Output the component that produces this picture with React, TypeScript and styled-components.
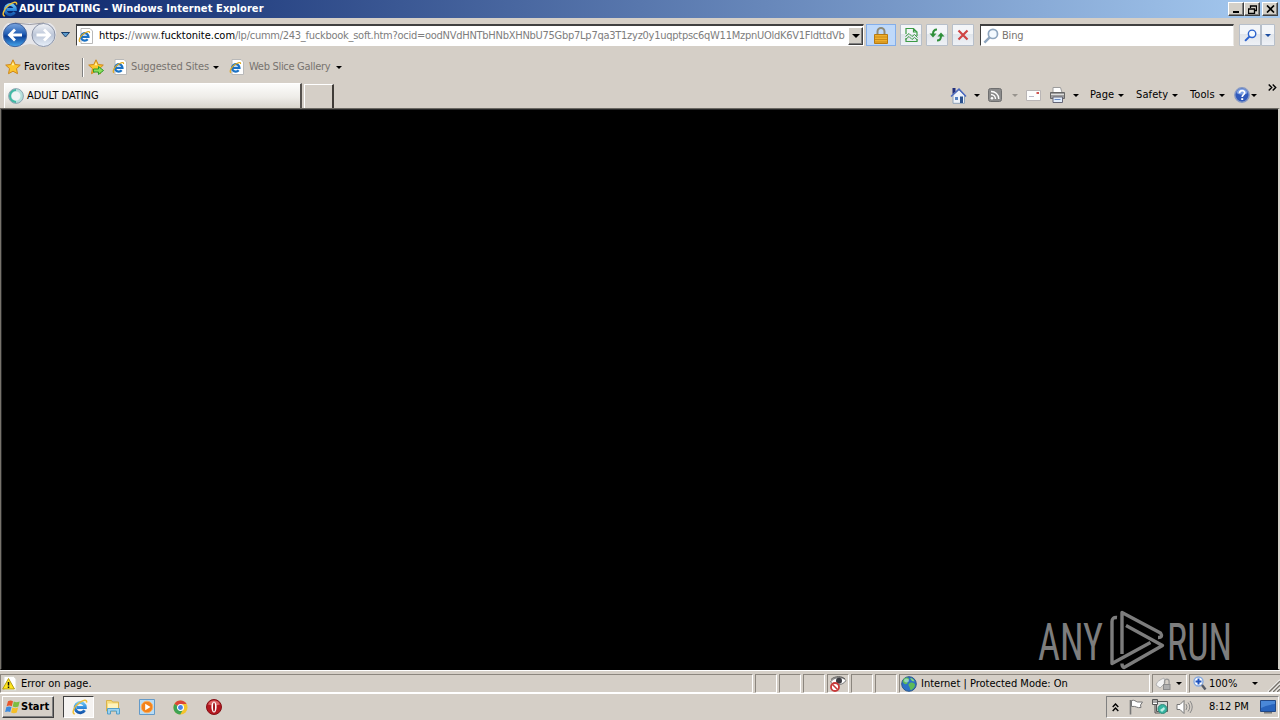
import React from 'react';
import styled, { createGlobalStyle, css } from 'styled-components';

const GlobalStyle = createGlobalStyle`
  * {
    box-sizing: border-box;
  }
  body {
    margin: 0;
    overflow: hidden;
    background: #d4d0c8;
    font-family: 'DejaVu Sans Condensed', 'DejaVu Sans', sans-serif;
    font-stretch: condensed;
    font-size: 11px;
    line-height: 14px;
    color: #000;
  }
  svg {
    display: block;
    flex: none;
  }
`;

type SpaceProps = { $ml?: number; $w?: number };

const URL_TAIL =
  '/lp/cumm/243_fuckbook_soft.htm?ocid=oodNVdHNTbHNbXHNbU75Gbp7Lp7qa3T1zyz0y1uqptpsc6qW11MzpnUOldK6V1FldttdVb';

const IeIcon = ({ size = 16 }: { size?: number }) => (
  <svg width={size} height={size} viewBox="0 0 16 16">
    <defs>
      <linearGradient id="ie" x1="0" y1="0" x2="0" y2="1">
        <stop offset="0" stopColor="#6cc4f3" />
        <stop offset=".5" stopColor="#2f8bdc" />
        <stop offset="1" stopColor="#1657ac" />
      </linearGradient>
    </defs>
    <path
      d="M12.600 11.200A5.100 5.100 0 1 1 13.300 8.600H5"
      fill="none"
      stroke="url(#ie)"
      strokeWidth="3"
    />
    <path
      d="M2.800 15C-.600 14.800 1.500 8 7 4 11 1 15.500-.200 14.500 3.600"
      fill="none"
      stroke="#efbe35"
      strokeWidth="1.500"
    />
  </svg>
);

const PageIeIcon = () => (
  <svg width="16" height="16" viewBox="0 0 16 16">
    <path d="M3 .5h9l2.500 2.500v12.500H3z" fill="#fff" stroke="#b9b9b9" />
    <path d="M9.700 11.200A3.700 3.700 0 1 1 10.500 8.800H4" fill="none" stroke="#1b72c4" strokeWidth="2.200" />
    <path d="M2 13.800C-.4 12.500 3 7.500 6 5.500s6-3 5.500-.5" fill="none" stroke="#dfa91f" strokeWidth="1.200" />
  </svg>
);

const NavIcons = () => (
  <svg width="58" height="28" viewBox="0 0 58 28">
    <defs>
      <linearGradient id="back" x1="0" y1="0" x2="0" y2="1">
        <stop offset="0" stopColor="#7ba6df" />
        <stop offset=".45" stopColor="#235fb5" />
        <stop offset=".55" stopColor="#0a3f98" />
        <stop offset="1" stopColor="#48a9ee" />
      </linearGradient>
      <linearGradient id="fwd" x1="0" y1="0" x2="0" y2="1">
        <stop offset="0" stopColor="#f2f4f8" />
        <stop offset=".5" stopColor="#bcc6d8" />
        <stop offset="1" stopColor="#e8f0fa" />
      </linearGradient>
    </defs>
    <path d="M8 2h42c5 3 7 8 6 13s-4 10-12 11c-6 0-9-3-14-3S20 27 13 26C4 25 1 18 2 12S5 4 8 2" fill="#e6e6ea" />
    <path d="M15 2q15 3 29 0" fill="none" stroke="#9a9aa2" />
    <circle cx="15" cy="14" r="11.700" fill="url(#back)" stroke="#43629a" />
    <path d="M22 14H10M15 8.500L9.500 14l5.500 5.500" fill="none" stroke="#fff" strokeWidth="2.800" />
    <circle cx="43.500" cy="14" r="11.500" fill="url(#fwd)" stroke="#8b93a6" />
    <path d="M36.500 14H49M44 8.500l5.500 5.500-5.500 5.500" fill="none" stroke="#fff" strokeWidth="2.800" />
  </svg>
);

const StarIcon = ({ add }: { add?: boolean }) => (
  <svg width="16" height="16" viewBox="0 0 16 16">
    <path
      d="M8 .8l2.200 4.700 5.100.6-3.800 3.500 1 5.100L8 12.200l-4.500 2.500 1-5.100L.7 6.100l5.100-.6z"
      fill="#fcc62d"
      stroke="#cf871a"
    />
    <path d="M8 3l1.300 3.300H6.500z" fill="#fff1a8" />
    {add && <path d="M5.500 10h5V7.500L15.500 11.500l-5 4V13h-5z" fill="#8be05c" stroke="#2f9a2c" />}
  </svg>
);

const LoadingIcon = () => (
  <svg width="16" height="16" viewBox="0 0 16 16">
    <circle cx="8" cy="8" r="6" fill="#eef4f4" stroke="#b5dfdc" strokeWidth="3" />
    <path d="M8 2a6 6 0 0 0-6 6 6 6 0 0 0 6 6" fill="none" stroke="#3fb9a4" strokeWidth="2" />
    <circle cx="8" cy="8" r="7.400" fill="none" stroke="#7d94a6" strokeWidth=".8" />
  </svg>
);

const LockIcon = () => (
  <svg width="14" height="17" viewBox="0 0 14 17">
    <path d="M3.500 8V4.500a3.500 3.500 0 0 1 7 0V8" fill="none" stroke="#8e8a78" strokeWidth="2" />
    <path d="M.5 7.500h13v9H.5z" fill="#efb02e" stroke="#b87a12" />
    <path d="M1 10h12M1 12.500h12M1 15h12" stroke="#c98a18" />
  </svg>
);

const CompatIcon = () => (
  <svg width="13" height="16" viewBox="0 0 13 16">
    <path d="M1 7V1.500h7.500L12 5v4M1 11v3.500h11V12M8.500 1.500V5H12" fill="none" stroke="#3c9a45" strokeWidth="1.200" />
    <path d="M.5 9.500L4 6.500l3 3 2.500-2 3 3M.5 12.500l3.500-3 3 3 2.500-2 3 2.500" fill="none" stroke="#3c9a45" />
  </svg>
);

const RefreshIcon = () => (
  <svg width="16" height="14" viewBox="0 0 16 14">
    <path d="M8 1.500C5 1.500 4 3 4 6" fill="none" stroke="#2f8f3a" strokeWidth="2" />
    <path d="M.5 5.500h7L4 9.500z" fill="#2f8f3a" />
    <path d="M8 12.500c3 0 4-1.500 4-4.500" fill="none" stroke="#2f8f3a" strokeWidth="2" />
    <path d="M8.500 8.500h7L12 4.500z" fill="#2f8f3a" />
  </svg>
);

const StopIcon = () => (
  <svg width="12" height="12" viewBox="0 0 12 12">
    <path d="M1.500 1.500l9 9M10.500 1.500l-9 9" stroke="#cf4444" strokeWidth="2.200" />
  </svg>
);

const MagnifierIcon = ({ color, size = 14 }: { color: string; size?: number }) => (
  <svg width={size} height={size} viewBox="0 0 14 14">
    <circle cx="8.700" cy="5.200" r="4" fill="#f4faff" stroke={color} strokeWidth="1.500" />
    <path d="M5.800 8.200L1.200 12.800" stroke={color} strokeWidth="2.200" />
  </svg>
);

const HomeIcon = () => (
  <svg width="17" height="17" viewBox="0 0 17 17">
    <path d="M3 8v8.300h11.500V8L9 3z" fill="#eef3fa" stroke="#8fa3b8" />
    <path d="M1 9.500L9 2l7 7.500" fill="none" stroke="#4a68c0" strokeWidth="1.500" />
    <path d="M2.500 1h3v3.500l-3 2.500z" fill="#22307c" />
    <path d="M5 10h3v3H5z" fill="#5482c4" />
    <path d="M10 9.500h3V16h-3z" fill="#2b518f" />
  </svg>
);

const FeedIcon = () => (
  <svg width="14" height="14" viewBox="0 0 14 14">
    <rect x=".5" y=".5" width="13" height="13" rx="2" fill="#8c8c8c" stroke="#6f6f6f" />
    <circle cx="4" cy="10.300" r="1.300" fill="#fff" />
    <path d="M3 6.500A4.500 4.500 0 0 1 7.500 11M3 3.500A7.500 7.500 0 0 1 10.800 11" fill="none" stroke="#fff" strokeWidth="1.400" />
  </svg>
);

const MailIcon = () => (
  <svg width="15" height="11" viewBox="0 0 15 11">
    <path d="M.5.5h14v10H.5z" fill="#fdfdfd" stroke="#b9b5b5" />
    <path d="M10.500 2h2.500v2h-2.500z" fill="#cf5350" />
    <path d="M3 6.500h5" stroke="#b8b8c8" />
  </svg>
);

const PrinterIcon = () => (
  <svg width="17" height="16" viewBox="0 0 17 16">
    <path d="M4 .5h7.500l1.500 5H4z" fill="#fff" stroke="#9c9c9c" />
    <path d="M1.500 5.500h14v6h-14z" fill="#9b9b9b" stroke="#666" />
    <path d="M2 7.500h13" stroke="#ddd" />
    <path d="M4 10h9.500v5.500H4z" fill="#e2edfa" stroke="#667" />
    <path d="M5.500 12.500h6" stroke="#6388c5" />
  </svg>
);

const HelpIcon = () => (
  <svg width="16" height="16" viewBox="0 0 16 16">
    <circle cx="8" cy="8" r="7.200" fill="#3059bb" stroke="#8699c4" strokeWidth="1.400" />
    <path d="M2.500 6a5.700 5.700 0 0 1 11 0c-3 2-8 2-11 0" fill="#7da0e4" />
    <path d="M5.500 6.200c0-3.600 5.200-3.300 5.200-.4C10.700 7.600 8.200 7.800 8.200 10" fill="none" stroke="#fff" strokeWidth="1.700" />
    <path d="M7.200 11.200h2v1.800h-2z" fill="#fff" />
  </svg>
);

const WarningIcon = () => (
  <svg width="15" height="15" viewBox="0 0 15 15">
    <path d="M2 .5h9.500l2.500 2.500v11.500H2z" fill="#fff" stroke="#d8d8d0" />
    <path d="M6.500 2.500L12.500 13H.7z" fill="#ffe51c" stroke="#b39c12" />
    <path d="M6.500 6v3.500M6.500 10.500V12" stroke="#111" strokeWidth="1.500" />
  </svg>
);

const PrivacyIcon = () => (
  <svg width="18" height="16" viewBox="0 0 18 16">
    <path d="M1.500 6c3-5 12-6 15.500-1.500-3 5-11.500 6-15.500 1.500" fill="#fff" stroke="#777" />
    <path d="M2 3.500C6-.3 13 0 16 3" fill="none" stroke="#555" />
    <circle cx="10" cy="4.700" r="3" fill="#3a3a40" />
    <circle cx="6" cy="11" r="4" fill="#fff" stroke="#c73a3a" strokeWidth="1.800" />
    <path d="M3.500 8.500l5 5" stroke="#c73a3a" strokeWidth="1.600" />
  </svg>
);

const GlobeIcon = () => (
  <svg width="16" height="16" viewBox="0 0 16 16">
    <circle cx="8" cy="8" r="7.300" fill="#2c72c6" stroke="#2a568c" />
    <path d="M3 2.500c3-2 5-1 5 .5S6 5 6.500 6.500 4 9 3 7.500 1 6 3 2.500M9 7c2-1 5 0 5 2s-2 4-3.500 5S9 11 8 10s-.5-2.300 1-3" fill="#5ebb57" />
    <path d="M9 2c2 0 4 1.500 4.500 3.500L11 5z" fill="#86d778" />
    <ellipse cx="5.500" cy="4.500" rx="2.500" ry="2" fill="#bde8f5" opacity=".6" />
  </svg>
);

const ShieldLockIcon = () => (
  <svg width="17" height="15" viewBox="0 0 17 15">
    <path d="M1 9c1-4 4-5 8-7l1 5-5 5z" fill="#f4f4f4" stroke="#b0b0b0" />
    <path d="M9.500 8V5.500a2.300 2.300 0 0 1 4.600 0V8" fill="none" stroke="#989898" strokeWidth="1.300" />
    <path d="M8 8h7.500v6H8z" fill="#8c8c8c" />
    <path d="M9 10h5.500M9 12h5.500" stroke="#d0d0d0" />
  </svg>
);

const ZoomIcon = () => (
  <svg width="14" height="15" viewBox="0 0 14 15">
    <circle cx="5.500" cy="5.500" r="4.500" fill="#fff" stroke="#86a9df" strokeWidth="1.400" />
    <path d="M5.500 2.500v6M2.500 5.500h6" stroke="#1d51bd" strokeWidth="2" />
    <path d="M9 9l3.500 4.500" stroke="#555a66" strokeWidth="2.400" />
  </svg>
);

const WindowsFlag = () => (
  <svg width="17" height="16" viewBox="0 0 16 16">
    <path d="M3.500 2.200c2-1 3.500-.8 5 0L7.300 7.200c-1.600-.9-3.200-.9-5.200 0z" fill="#e8562b" />
    <path d="M9.300 2.600c2 .9 3.600.8 5.900-.1l-1.300 5c-2 .9-3.800.9-5.700 0z" fill="#7cbd42" />
    <path d="M1.900 8.100c2-.9 3.600-.8 5.100 0l-1.300 5c-1.500-.9-3-.9-5.100 0z" fill="#3c8ade" />
    <path d="M7.900 8.500c2 .9 3.800.8 5.700 0l-1.300 5c-2 .9-3.700.9-5.700 0z" fill="#f5bf27" />
  </svg>
);

const ExplorerIcon = () => (
  <svg width="16" height="16" viewBox="0 0 16 16">
    <path d="M1.500 1.500h5l1 1.500h6v9h-12z" fill="#f6dc7d" stroke="#d9b24b" />
    <path d="M3 4.500h10V9H3z" fill="#fff3bd" />
    <path d="M2.500 15V9.500h12V15h-3v-3h-6v3z" fill="#9bd3f1" stroke="#549fc9" />
  </svg>
);

const MediaIcon = () => (
  <svg width="17" height="16" viewBox="0 0 17 16">
    <path d="M.5.5h15v15H.5z" fill="#b8dcf5" stroke="#649ac8" />
    <circle cx="8" cy="8" r="5.800" fill="#f3831b" stroke="#f9b064" />
    <path d="M6.200 4.700L11.500 8l-5.300 3.300z" fill="#fff" />
  </svg>
);

const ChromeIcon = () => (
  <svg width="15" height="15" viewBox="0 0 16 16">
    <circle cx="8" cy="8" r="7.500" fill="#f4c42c" />
    <path d="M8 8L1.500 4.200A7.500 7.500 0 0 1 14.500 4.300H8z" fill="#dc4538" />
    <path d="M8 8L1.500 4.200A7.500 7.500 0 0 0 7.700 15.500L11 9.700z" fill="#3ea353" />
    <circle cx="8" cy="8" r="3.200" fill="#4684e8" stroke="#fff" strokeWidth="1.200" />
  </svg>
);

const OperaIcon = () => (
  <svg width="16" height="16" viewBox="0 0 16 16">
    <circle cx="8" cy="8" r="7.500" fill="#b41820" stroke="#841015" />
    <path d="M2 5.500a6.500 6.500 0 0 1 12 0c-4 1.500-8 1.500-12 0" fill="#dd6566" />
    <ellipse cx="8" cy="8" rx="2.600" ry="5.500" fill="#fff" />
    <ellipse cx="8" cy="8" rx="1" ry="4.500" fill="#a3161c" />
  </svg>
);

const FlagIcon = () => (
  <svg width="16" height="16" viewBox="0 0 16 16">
    <path d="M2.500 1v14.500" stroke="#777" strokeWidth="1.600" />
    <path d="M3.500 1.500c3-1 4 1 6 1.500h5l-2 3 .5 2.500c-4 1-5-2-9.500-1z" fill="#fff" stroke="#777" />
  </svg>
);

const NetworkIcon = () => (
  <svg width="16" height="16" viewBox="0 0 16 16">
    <path d="M4.500 2.500h11v10h-11z" fill="#d4d9d8" stroke="#555" />
    <path d="M.5.500h5v5h-5z" fill="#fff" stroke="#555" />
    <path d="M2 1v3M4 1v3M3 6v8h5" fill="none" stroke="#555" />
    <circle cx="10.500" cy="10" r="4.500" fill="#36b5a2" stroke="#338878" />
    <path d="M8 11l4-3 1 2-3 3z" fill="#b9efe4" />
  </svg>
);

const SpeakerIcon = () => (
  <svg width="17" height="16" viewBox="0 0 17 16">
    <path d="M1 5.500h3l4-4v13l-4-4H1z" fill="#fff" stroke="#777" />
    <path d="M10 5q2 3 0 6M12 3.500q3.500 4.500 0 9M14 2q4.500 6 0 12" fill="none" stroke="#888" />
  </svg>
);

const DesktopIcon = () => (
  <svg width="16" height="14" viewBox="0 0 16 14">
    <path d="M.5.500h15v11H.5z" fill="#2864bd" stroke="#234986" />
    <path d="M1 1h14v3Q6 5 1 8z" fill="#4a88d8" />
    <path d="M4 12.800h8" stroke="#777" strokeWidth="1.400" />
  </svg>
);

const SizeGrip = () => (
  <svg width="13" height="13" viewBox="0 0 13 13">
    <path d="M1 13L13 1M5 13l8-8M9 13l4-4" stroke="#fff" strokeWidth="1.500" />
    <path d="M2 13L13 2M6 13l7-7M10 13l3-3" stroke="#77736c" strokeWidth="1.300" />
  </svg>
);

const Watermark = () => (
  <svg width="200" height="66" viewBox="0 0 200 66" overflow="visible">
    <g fill="#7d7d7d" fontFamily="Roboto, sans-serif" fontSize="52" fontWeight="400">
      <text x="2" y="57" textLength="65" lengthAdjust="spacingAndGlyphs">ANY</text>
      <text x="131" y="57" textLength="65" lengthAdjust="spacingAndGlyphs">RUN</text>
    </g>
    <g fill="none" stroke="#7d7d7d" strokeWidth="3.400" strokeLinejoin="round">
      <path d="M81 14.500q-5-.5-5 4V60.500L114.500 39.500" />
      <path d="M86 51V9.500L124.500 30q3 4.500-2.500 4.500" />
      <path d="M90 22.500L126.500 42.500L88 64.500q-2-.5-2-4" />
    </g>
  </svg>
);

const App = () => (
  <Window>
    <GlobalStyle />
    <TitleBar>
      <IeIcon />
      <TitleText>ADULT DATING - Windows Internet Explorer</TitleText>
      <CaptionButton>
        <svg width="8" height="8"><path d="M1 6h6v2H1z" /></svg>
      </CaptionButton>
      <CaptionButton>
        <svg width="9" height="9" viewBox="0 0 9 9">
          <path d="M2.500 3V1h6v4.500H6.500M2 1h7M.5 4h6v4.500h-6zM0 4h7" fill="none" stroke="#000" strokeWidth="1.300" />
        </svg>
      </CaptionButton>
      <CaptionButton $ml={2}>
        <svg width="9" height="8" viewBox="0 0 9 8"><path d="M1 .5l7 7M8 .5l-7 7" stroke="#000" strokeWidth="1.700" /></svg>
      </CaptionButton>
    </TitleBar>

    <NavBar>
      <NavIcons />
      <HistoryArrow width="9" height="6" viewBox="0 0 9 6">
        <path d="M.5.5h8L4.500 5z" fill="#5a99cb" stroke="#173c68" />
      </HistoryArrow>
      <AddressBox>
        <PageIeIcon />
        <AddressText>
          <UrlHost>https:</UrlHost>//www.<UrlHost>fucktonite.com</UrlHost>
          <UrlTail>{URL_TAIL}</UrlTail>
        </AddressText>
        <ComboButton><Arrow $size={4} /></ComboButton>
      </AddressBox>
      <LockButton><LockIcon /></LockButton>
      <ToolButton $ml={4}><CompatIcon /></ToolButton>
      <ToolButton $ml={4}><RefreshIcon /></ToolButton>
      <ToolButton $ml={4}><StopIcon /></ToolButton>
      <SearchBox>
        <MagnifierIcon color="#8fa6bf" size={16} />
        <Label $ml={3} $muted $track={-0.2}>Bing</Label>
      </SearchBox>
      <ToolButton $ml={5} $w={22}><MagnifierIcon color="#2b62cd" size={13} /></ToolButton>
      <ToolButton $w={14}><Arrow $color="#1b4da0" /></ToolButton>
    </NavBar>

    <FavoritesBar>
      <StarIcon />
      <Label $ml={3} $w={58} $track={0.12}>Favorites</Label>
      <Divider />
      <StarIcon add />
      <Item $ml={8}><PageIeIcon /></Item>
      <Label $ml={3} $w={82} $muted $track={-0.12}>Suggested Sites</Label>
      <Arrow />
      <Item $ml={10}><PageIeIcon /></Item>
      <Label $ml={4} $w={87} $muted $track={-0.3}>Web Slice Gallery</Label>
      <Arrow />
    </FavoritesBar>

    <TabBar>
      <Tab>
        <LoadingIcon />
        <Label $ml={3} $track={-0.05}>ADULT DATING</Label>
      </Tab>
      <NewTab />
      <CommandBar>
        <Item $w={24}><HomeIcon /></Item>
        <Arrow />
        <Item $ml={8} $w={24}><FeedIcon /></Item>
        <Arrow $color="#98948e" />
        <Item $ml={8} $w={23}><MailIcon /></Item>
        <Item $w={24}><PrinterIcon /></Item>
        <Arrow />
        <Label $ml={11} $w={28} $track={0.1}>Page</Label>
        <Arrow />
        <Label $ml={12} $w={36} $track={0.1}>Safety</Label>
        <Arrow />
        <Label $ml={12} $w={29} $track={0.1}>Tools</Label>
        <Arrow />
        <Item $ml={9} $w={17}><HelpIcon /></Item>
        <Arrow />
        <Chevron width="9" height="7" viewBox="0 0 9 7">
          <path d="M.7.5l3 3-3 3M4.700.5l3 3-3 3" fill="none" stroke="#000" strokeWidth="1.400" />
        </Chevron>
      </CommandBar>
    </TabBar>

    <Content>
      <Watermark />
    </Content>

    <StatusBar>
      <StatusPane $grow>
        <WarningIcon />
        <Label $ml={4}>Error on page.</Label>
      </StatusPane>
      <StatusPane $w={22} />
      <StatusPane $w={22} />
      <StatusPane $w={22} />
      <StatusPane $w={22}><PrivacyIcon /></StatusPane>
      <StatusPane $w={22} />
      <StatusPane $w={22} />
      <StatusPane $w={251}>
        <GlobeIcon />
        <Label $ml={4}>Internet | Protected Mode: On</Label>
      </StatusPane>
      <StatusPane $w={35}>
        <Item $ml={1} $w={21}><ShieldLockIcon /></Item>
        <Arrow />
      </StatusPane>
      <StatusPane $w={91} $open>
        <Item $ml={2} $w={16}><ZoomIcon /></Item>
        <Label $w={43}>100%</Label>
        <Arrow />
        <Grip><SizeGrip /></Grip>
      </StatusPane>
    </StatusBar>

    <Taskbar>
      <StartButton>
        <WindowsFlag />
        <Label $bold>Start</Label>
      </StartButton>
      <ActiveTask><IeIcon /></ActiveTask>
      <Item $ml={11} $w={34}><ExplorerIcon /></Item>
      <Item $w={34}><MediaIcon /></Item>
      <Item $w={33}><ChromeIcon /></Item>
      <Item><OperaIcon /></Item>
      <Tray>
        <Item $ml={5} $w={16}>
          <svg width="7" height="9" viewBox="0 0 7 9">
            <path d="M.7 4l2.800-3 2.800 3M.7 8l2.800-3 2.800 3" fill="none" stroke="#000" strokeWidth="1.400" />
          </svg>
        </Item>
        <Item $w={24}><FlagIcon /></Item>
        <Item $w={24}><NetworkIcon /></Item>
        <Item $w={33}><SpeakerIcon /></Item>
        <Label $w={51}>8:12 PM</Label>
        <DesktopIcon />
      </Tray>
    </Taskbar>
  </Window>
);

export default App;

const space = css<SpaceProps>`
  margin-left: ${({ $ml = 0 }) => $ml}px;
  ${({ $w }) => $w !== undefined && `width: ${$w}px;`}
`;

const Window = styled.div`
  display: flex;
  flex-direction: column;
  width: 1280px;
  height: 720px;
  background: #d5cfc7;
`;

const Item = styled.div<SpaceProps>`
  ${space}
  display: flex;
  align-items: center;
  flex: none;
`;

const Label = styled.span<SpaceProps & { $muted?: boolean; $bold?: boolean; $track?: number }>`
  ${space}
  flex: none;
  white-space: nowrap;
  color: ${({ $muted }) => ($muted ? '#77736f' : '#000')};
  font-weight: ${({ $bold }) => ($bold ? 700 : 400)};
  letter-spacing: ${({ $track = 0 }) => $track}px;
`;

const Arrow = styled.span<{ $size?: number; $color?: string }>`
  flex: none;
  border: ${({ $size = 3 }) => $size}px solid transparent;
  border-top-color: ${({ $color = '#000' }) => $color};
  border-bottom: 0;
`;

const TitleBar = styled.header`
  display: flex;
  align-items: center;
  height: 18px;
  padding: 0 2px;
  background: linear-gradient(90deg, #0a246a, #a6caf0);
`;

const TitleText = styled.h1`
  flex: 1;
  margin: 0 0 0 1px;
  font-size: 11px;
  line-height: 14px;
  letter-spacing: 0.09px;
  color: #fff;
`;

const raised = css`
  border: 1px solid;
  border-color: #fff #404040 #404040 #fff;
  box-shadow: inset -1px -1px #808080;
`;

const CaptionButton = styled.div<SpaceProps>`
  ${space}
  ${raised}
  display: flex;
  justify-content: center;
  align-items: center;
  width: 16px;
  height: 14px;
  background: #d4d0c8;
`;

const NavBar = styled.div`
  display: flex;
  align-items: center;
  height: 34px;
`;

const HistoryArrow = styled.svg`
  margin: 0 7px 0 3px;
`;

const AddressBox = styled.div`
  display: flex;
  align-items: center;
  width: 788px;
  height: 22px;
  margin-left: -1px;
  padding-left: 1px;
  border: 1px solid;
  border-color: #404040 #fff #fff #404040;
  border-top-width: 2px;
  background: #fff;
`;

const AddressText = styled.div`
  flex: 1;
  min-width: 0;
  margin-left: 5px;
  overflow: hidden;
  white-space: nowrap;
  color: #7d7d7d;
`;

const UrlHost = styled.span`
  color: #000;
`;

const UrlTail = styled.span`
  letter-spacing: -0.26px;
`;

const ComboButton = styled.div`
  ${raised}
  display: flex;
  justify-content: center;
  align-items: center;
  flex: none;
  width: 15px;
  height: 18px;
  background: #d4d0c8;
`;

const LockButton = styled.div`
  display: flex;
  justify-content: center;
  align-items: center;
  width: 30px;
  height: 22px;
  margin-left: 2px;
  border: 1px solid #83aeea;
  background: #bfd9fa;
`;

const ToolButton = styled.div<SpaceProps>`
  display: flex;
  justify-content: center;
  align-items: center;
  width: 22px;
  height: 22px;
  border: 1px solid #b7bfca;
  border-radius: 1px;
  background: linear-gradient(#f3f5f8 0 45%, #e1e5eb 46%, #eef1f6);
  ${space}
`;

const SearchBox = styled.div`
  display: flex;
  align-items: center;
  width: 254px;
  height: 22px;
  margin-left: 6px;
  padding-left: 2px;
  border: 1px solid;
  border-color: #404040 #e8e6e2 #fff #404040;
  border-top-width: 2px;
  background: #fff;
`;

const FavoritesBar = styled.div`
  display: flex;
  align-items: center;
  height: 30px;
  padding-left: 5px;
`;

const Divider = styled.div`
  width: 2px;
  height: 19px;
  margin-right: 4px;
  border-left: 1px solid #808080;
  border-right: 1px solid #fff;
`;

const TabBar = styled.div`
  display: flex;
  height: 26px;
  padding: 1px 0 0 4px;
`;

const Tab = styled.div`
  display: flex;
  align-items: center;
  width: 298px;
  padding-left: 3px;
  border-top: 1px solid #fff;
  border-left: 1px solid #fff;
  border-right: 2px solid #55514d;
  background: linear-gradient(#fcfcfb, #eeece8 55%, #d8d4cc);
`;

const NewTab = styled.div`
  width: 30px;
  margin: 1px 0 0 2px;
  border: 1px solid #fff;
  border-right: 2px solid #403c38;
  border-bottom: 0;
`;

const CommandBar = styled.nav`
  display: flex;
  align-items: center;
  height: 24px;
  margin-left: auto;
  padding-right: 3px;
`;

const Chevron = styled.svg`
  align-self: flex-start;
  margin: 1px 0 0 11px;
`;

const Content = styled.main`
  display: flex;
  justify-content: flex-end;
  align-items: flex-end;
  height: 562px;
  padding-right: 42px;
  border: 1px solid;
  border-color: #6b6862 #d4d0c8 #000 #77736c;
  border-right-width: 2px;
  box-shadow: inset 1px 1px #282828;
  background: #000;
`;

const StatusBar = styled.footer`
  display: flex;
  gap: 2px;
  height: 24px;
  padding: 3px 0 1px;
  border-top: 1px solid #fff;
  border-bottom: 1px solid #fff;
`;

const StatusPane = styled.div<SpaceProps & { $grow?: boolean; $open?: boolean }>`
  ${space}
  display: flex;
  align-items: center;
  flex: ${({ $grow }) => ($grow ? 1 : 'none')};
  height: 19px;
  padding-left: 1px;
  border: 1px solid;
  border-color: #8b867e #fff #fff #8b867e;
  ${({ $open }) => $open && 'border-right: 0;'}
`;

const Grip = styled.div`
  align-self: flex-end;
  margin-left: auto;
`;

const Taskbar = styled.footer`
  display: flex;
  align-items: center;
  height: 26px;
  padding-left: 2px;
`;

const StartButton = styled.div`
  ${raised}
  display: flex;
  align-items: center;
  width: 52px;
  height: 22px;
  padding-left: 1px;
`;

const ActiveTask = styled.div`
  display: flex;
  justify-content: center;
  align-items: center;
  width: 31px;
  height: 22px;
  margin-left: 9px;
  padding-left: 2px;
  border: 1px solid;
  border-color: #404040 #fff #fff #404040;
  background: #f5f3f1;
`;

const Tray = styled.div`
  display: flex;
  align-items: center;
  width: 173px;
  height: 22px;
  margin-left: auto;
  margin-right: 1px;
  border: 1px solid;
  border-color: #808080 #fff #fff #808080;
`;
